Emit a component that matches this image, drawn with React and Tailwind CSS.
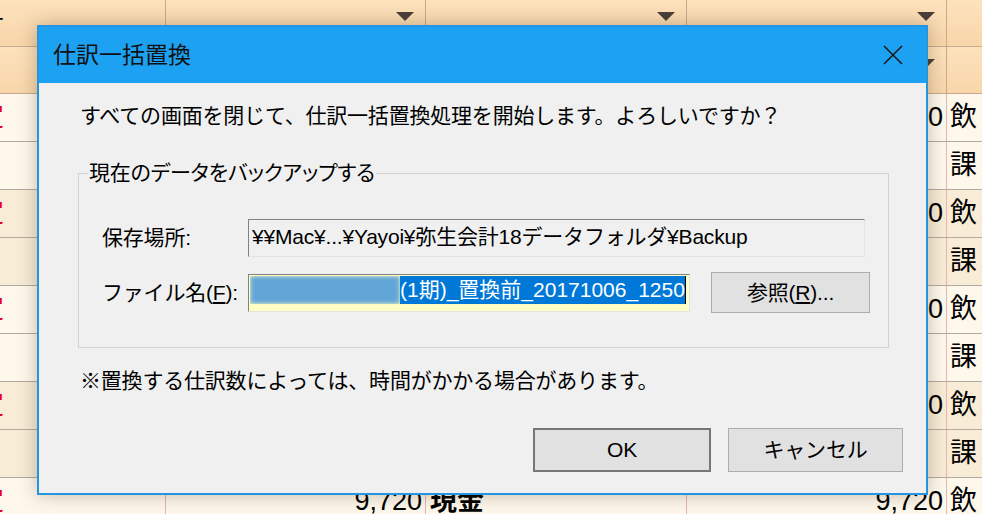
import React from 'react';

const rows = Array.from({ length: 9 }, (_, i) => i);

function Arrow() {
  return (
    <svg width="18" height="9" viewBox="0 0 18 9">
      <path d="M0 0H18L9 9Z" fill="#4a4039" />
    </svg>
  );
}

function HeaderRow({ first }) {
  return (
    <div className="flex h-[47px] border-b border-[#c8ab8e] bg-gradient-to-b from-[#fde2bc] to-[#f8d6aa]">
      <div className="w-[166px] shrink-0 border-r border-[#c8ab8e] overflow-hidden">
        {first && <span className="block -ml-[22px] text-[26px] leading-[40px]">号</span>}
      </div>
      <div className="w-[260px] shrink-0 border-r border-[#c8ab8e] flex justify-end items-start pt-[12px] pr-[11px]"><Arrow /></div>
      <div className="w-[261px] shrink-0 border-r border-[#c8ab8e] flex justify-end items-start pt-[12px] pr-[11px]"><Arrow /></div>
      <div className="w-[260px] shrink-0 border-r border-[#c8ab8e] flex justify-end items-start pt-[12px] pr-[11px]"><Arrow /></div>
      <div className="flex-1" />
    </div>
  );
}

function BodyRow({ i }) {
  const first = i % 2 === 0;
  const light = Math.floor(i / 2) % 2 === 0;
  return (
    <div className={`flex h-[48px] shrink-0 border-b border-[#b3aaa0] text-[27px] leading-[46px] ${light ? 'bg-[#fef8ec]' : 'bg-[#f8ecd7]'}`}>
      <div className="w-[166px] shrink-0 border-r border-[#e6b7ae] overflow-hidden">
        {first && <span className="block -ml-[23px] text-[#e60026]">定</span>}
      </div>
      <div className="w-[260px] shrink-0 border-r border-[#e6b7ae] text-right pr-[3px]">{first ? '9,720' : ''}</div>
      <div className="w-[261px] shrink-0 border-r border-[#e6b7ae] pl-[4px] font-bold">{first ? '現金' : ''}</div>
      <div className="w-[260px] shrink-0 border-r border-[#e6b7ae] text-right pr-[3px]">{first ? '9,720' : ''}</div>
      <div className="flex-1 pl-[3px]">{first ? '飲' : '課'}</div>
    </div>
  );
}

function WinButton({ children, className }) {
  return (
    <div className={`flex items-center justify-center bg-[#e1e1e1] ${className}`}>
      {children}
    </div>
  );
}

export default function App() {
  return (
    <div className="relative w-[982px] h-[514px] overflow-hidden bg-[#fef8ec] text-black font-['Liberation_Sans','Noto_Sans_CJK_JP',sans-serif]">
      {/* 背景の仕訳一覧 */}
      <div className="flex flex-col">
        <HeaderRow first />
        <HeaderRow />
        {rows.map(i => <BodyRow key={i} i={i} />)}
      </div>

      {/* ダイアログ */}
      <div className="absolute left-[37px] top-[25px] w-[891px] h-[470px] border-2 border-[#2794e0] bg-[#f0f0f0] shadow-[0_0_18px_rgba(60,40,20,0.3)] flex flex-col text-[21px] tracking-[-0.2px]">
        <div className="h-[56px] shrink-0 bg-[#1da1f2] flex items-center justify-between pl-[14px] pr-[23px]">
          <span className="text-[23px] text-[#111] tracking-normal">仕訳一括置換</span>
          <svg width="20" height="20" viewBox="0 0 20 20">
            <path d="M1 1L19 19M19 1L1 19" stroke="#1a1a1a" strokeWidth="1.6" />
          </svg>
        </div>

        <p className="pt-[19px] pl-[41px] leading-[28px]">
          すべての画面を閉じて、仕訳一括置換処理を開始します。よろしいですか？
        </p>

        <fieldset className="mt-[29px] ml-[39px] mr-[37px] border border-[#d2d2d2] pl-[9px] pb-[34px]">
          <legend className="px-[1px] leading-[28px] [font-feature-settings:'palt']">現在のデータをバックアップする</legend>

          <div className="mt-[32px] ml-[14px] flex items-center h-[38px]">
            <span className="w-[146px] shrink-0 leading-[28px]">保存場所:</span>
            <div className="w-[617px] h-[38px] border-t border-l border-[#828282] border-b border-r border-b-[#e3e3e3] border-r-[#e3e3e3] bg-[#f0f0f0] pl-[3px] leading-[34px] whitespace-nowrap overflow-hidden">
              ¥¥Mac¥...¥Yayoi¥弥生会計18データフォルダ¥Backup
            </div>
          </div>

          <div className="mt-[15px] ml-[14px] flex items-center h-[41px]">
            <span className="w-[146px] shrink-0 leading-[28px]">
              ファイル名(<span className="underline underline-offset-2">F</span>):
            </span>
            <div className="w-[442px] h-[38px] border-t border-l border-[#828282] border-b border-r border-b-[#e3e3e3] border-r-[#e3e3e3] bg-[#ffffc4] flex items-start pt-[1px] pl-[1px] overflow-hidden">
              <div className="w-[150px] h-[28px] shrink-0 overflow-hidden">
                <div className="w-full h-full bg-[#62a6d8] blur-[2px]" />
              </div>
              <span className="h-[28px] leading-[28px] bg-[#0078d7] text-white whitespace-nowrap tracking-normal">(1期)_置換前_20171006_1250</span>
              <span className="w-[1px] h-[28px] bg-black shrink-0" />
            </div>
            <WinButton className="ml-[21px] w-[159px] h-[41px] border border-[#adadad]">
              <span>参照(<span className="underline underline-offset-2">R</span>)...</span>
            </WinButton>
          </div>
        </fieldset>

        <p className="mt-[19px] pl-[41px] leading-[28px]">
          ※置換する仕訳数によっては、時間がかかる場合があります。
        </p>

        <div className="mt-[33px] flex justify-end gap-[17px] pr-[23px]">
          <WinButton className="w-[178px] h-[44px] border-2 border-[#767676]">OK</WinButton>
          <WinButton className="w-[175px] h-[44px] border border-[#adadad]">キャンセル</WinButton>
        </div>
      </div>
    </div>
  );
}
